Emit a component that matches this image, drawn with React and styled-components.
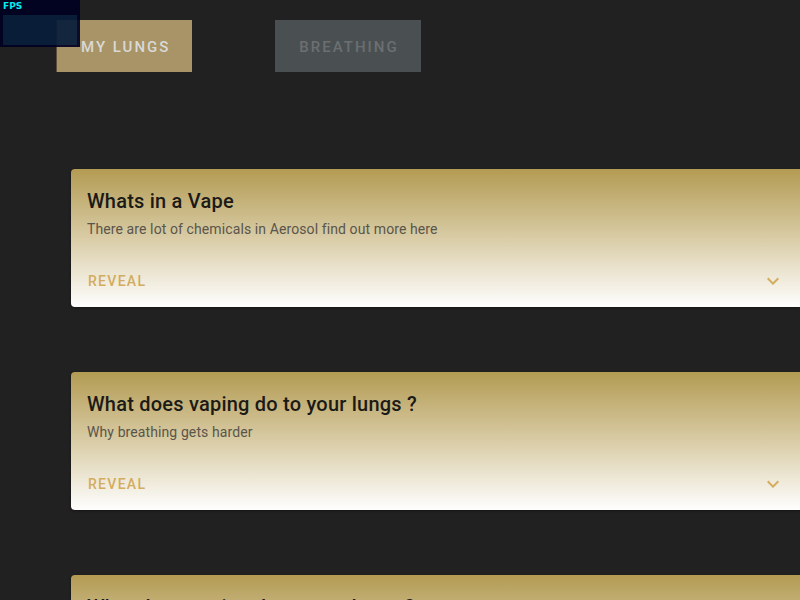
import React from "react";
import styled, { createGlobalStyle } from "styled-components";

const Global = createGlobalStyle`
  html, body { margin: 0; padding: 0; background: #212121; }
  body { font-family: Roboto, "Noto Sans", "Liberation Sans", sans-serif; overflow: hidden; }
`;

const Page = styled.div`
  position: relative;
  width: 800px;
  height: 600px;
  overflow: hidden;
  background: #212121;
`;

const Tabs = styled.div`
  display: flex;
  gap: 83px;
  padding: 20px 0 0 56px;
`;

const TabButton = styled.button`
  height: 52px;
  padding: 1px 22px 0 ${(p) => (p.$active ? "25px" : "24px")};
  border: none;
  border-radius: 0;
  font-family: Roboto, "Liberation Sans", sans-serif;
  font-weight: 500;
  font-size: 15px;
  letter-spacing: 2px;
  text-transform: uppercase;
  background: ${(p) => (p.$active ? "#a89466" : "#4a5052")};
  color: ${(p) => (p.$active ? "#d9d9d6" : "#6b6f71")};
  box-shadow: ${(p) => (p.$active ? "inset 1px 0 0 #5a4f36" : "none")};
`;

const CardList = styled.div`
  display: flex;
  flex-direction: column;
  gap: 65px;
  padding: 97px 0 0 71px;
`;

const Card = styled.div`
  width: 729px;
  border-radius: 4px 0 0 4px;
  background: linear-gradient(to bottom, #b39b53 0%, #d9cca6 50%, #fefefe 100%);
  box-shadow: 0 1px 3px rgba(0, 0, 0, 0.4);
  flex-shrink: 0;
`;

const CardBody = styled.div`
  padding: 16px 16px 16px 16px;
`;

const Title = styled.h2`
  margin: 0;
  font-size: 20px;
  font-weight: 500;
  line-height: 32px;
  color: #1b1a17;
  letter-spacing: 0.22px;
`;

const Subtitle = styled.p`
  margin: 2px 0 0 0;
  font-size: 14px;
  line-height: 20px;
  color: #5a554a;
  letter-spacing: 0.1px;
`;

const Actions = styled.div`
  display: flex;
  align-items: center;
  justify-content: space-between;
  padding: 8px 15px 8px 8px;
  height: 36px;
`;

const Reveal = styled.button`
  height: 36px;
  padding: 0 9px;
  border: none;
  background: transparent;
  font-family: Roboto, "Liberation Sans", sans-serif;
  font-weight: 500;
  font-size: 14px;
  letter-spacing: 1.3px;
  color: #d3ac5e;
`;

const Chevron = styled.svg`
  width: 24px;
  height: 24px;
  fill: #d3ac5e;
`;

const Fps = styled.div`
  position: absolute;
  left: 0;
  top: 0;
  width: 80px;
  height: 47px;
  background: #000022;
  opacity: 0.92;
`;

const FpsLabel = styled.div`
  position: absolute;
  left: 3px;
  top: 1px;
  font-family: "DejaVu Sans", "Liberation Sans", sans-serif;
  font-weight: bold;
  font-size: 9px;
  line-height: 11px;
  color: #00ffff;
`;

const FpsGraph = styled.div`
  position: absolute;
  left: 3px;
  top: 15px;
  width: 74px;
  height: 30px;
  background: #0a2a44;
  opacity: 0.7;
`;

const cards = [
  { title: "Whats in a Vape", sub: "There are lot of chemicals in Aerosol find out more here" },
  { title: "What does vaping do to your lungs ?", sub: "Why breathing gets harder" },
  { title: "What does vaping do to your heart ?", sub: "Your heart works harder" },
];

export default function App() {
  return (
    <Page>
      <Global />
      <Tabs>
        <TabButton $active>My Lungs</TabButton>
        <TabButton>Breathing</TabButton>
      </Tabs>
      <CardList>
        {cards.map((c) => (
          <Card key={c.title}>
            <CardBody>
              <Title>{c.title}</Title>
              <Subtitle>{c.sub}</Subtitle>
            </CardBody>
            <Actions>
              <Reveal>REVEAL</Reveal>
              <Chevron viewBox="0 0 24 24">
                <path d="M16.59 8.59 12 13.17 7.41 8.59 6 10l6 6 6-6z" />
              </Chevron>
            </Actions>
          </Card>
        ))}
      </CardList>
      <Fps>
        <FpsLabel>FPS</FpsLabel>
        <FpsGraph />
      </Fps>
    </Page>
  );
}
